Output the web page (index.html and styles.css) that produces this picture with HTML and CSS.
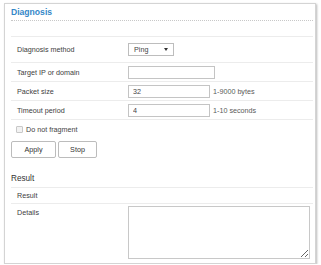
FILE: index.html
```html
<!DOCTYPE html>
<html>
<head>
<meta charset="utf-8">
<link rel="stylesheet" href="styles.css">
</head>
<body>
<div class="panel">
  <div class="title">Diagnosis</div>
  <div class="form">
    <div class="row row-first">
      <div class="label">Diagnosis method</div>
      <div class="field">
        <span class="select-wrap"><select class="select"><option>Ping</option><option>Traceroute</option></select></span>
      </div>
    </div>
    <div class="row">
      <div class="label">Target IP or domain</div>
      <div class="field"><input class="input input-wide" type="text" value=""></div>
    </div>
    <div class="row">
      <div class="label">Packet size</div>
      <div class="field"><input class="input" type="text" value="32"><span class="hint">1-9000 bytes</span></div>
    </div>
    <div class="row row-last">
      <div class="label">Timeout period</div>
      <div class="field"><input class="input" type="text" value="4"><span class="hint">1-10 seconds</span></div>
    </div>
  </div>
  <label class="check-row"><input class="check" type="checkbox"><span>Do not fragment</span></label>
  <div class="buttons">
    <button class="btn btn-apply">Apply</button>
    <button class="btn btn-stop">Stop</button>
  </div>
  <div class="section">Result</div>
  <div class="form">
    <div class="row row-result">
      <div class="label">Result</div>
      <div class="field"></div>
    </div>
    <div class="row row-details">
      <div class="label label-top">Details</div>
      <div class="field field-top"><textarea class="textarea"></textarea></div>
    </div>
  </div>
</div>
</body>
</html>
```
FILE: styles.css
```css
html, body {
  margin: 0;
  padding: 0;
  background: #ffffff;
}
body {
  font-family: "Liberation Sans", Arial, sans-serif;
  font-size: 7.2px;
  color: #444444;
}
.panel {
  box-sizing: border-box;
  margin: 3px 0 0 4px;
  width: 312px;
  height: 261px;
  border: 1px solid #d4d4d4;
  box-shadow: 1px 1px 2px rgba(0, 0, 0, 0.28);
  padding: 0 2px 0 6px;
  background: #ffffff;
}
.title {
  padding: 2px 0 2px 0;
  line-height: 12px;
  font-size: 8.6px;
  font-weight: bold;
  color: #3387c8;
  border-bottom: 1px dotted #c8c8c8;
}
.form {
  display: flex;
  flex-direction: column;
}
.title + .form {
  margin-top: 15px;
}
.row {
  display: flex;
  align-items: center;
  height: 18px;
  border-top: 1px solid #ececec;
}
.row-first {
  height: 25px;
}
.row-last {
  border-bottom: 1px solid #ececec;
}
.label {
  width: 111px;
  padding-left: 6px;
  flex: none;
  color: #404040;
}
.field {
  display: flex;
  align-items: center;
  gap: 3px;
}
.select-wrap {
  position: relative;
  display: inline-block;
}
.select {
  appearance: none;
  -webkit-appearance: none;
  box-sizing: border-box;
  width: 46px;
  height: 13px;
  border: 1px solid #bdbdbd;
  border-radius: 0;
  background: #ffffff;
  font-family: inherit;
  font-size: 7.2px;
  color: #444;
  padding: 0 0 0 5px;
  margin: 0;
  display: block;
}
.select-wrap::after {
  content: "";
  position: absolute;
  right: 6px;
  top: 5px;
  border-left: 2px solid transparent;
  border-right: 2px solid transparent;
  border-top: 3px solid #333;
}
.input {
  box-sizing: border-box;
  width: 82px;
  height: 13px;
  border: 1px solid #c4c4c4;
  border-radius: 0;
  padding: 0 0 0 4px;
  margin: 0;
  font-family: inherit;
  font-size: 7.2px;
  color: #444;
  background: #fff;
  outline: none;
}
.input-wide {
  width: 87px;
}
.hint {
  color: #5a5a5a;
}
.check-row {
  display: flex;
  align-items: center;
  gap: 3px;
  height: 18px;
  padding-left: 5px;
  color: #444;
}
.check {
  appearance: none;
  -webkit-appearance: none;
  box-sizing: border-box;
  width: 7px;
  height: 7px;
  margin: 0;
  border: 1px solid #c8c8c8;
  border-radius: 1px;
  background: #f2f2f2;
}
.buttons {
  display: flex;
  gap: 2px;
  margin-top: 3px;
}
.btn {
  box-sizing: border-box;
  height: 17px;
  border: 1px solid #bcbcbc;
  border-radius: 2px;
  background: #ffffff;
  font-family: inherit;
  font-size: 7.2px;
  color: #333;
  padding: 0;
  margin: 0;
}
.btn-apply {
  width: 45px;
}
.btn-stop {
  width: 39px;
}
.section {
  margin-top: 15px;
  line-height: 12px;
  padding-bottom: 2px;
  font-size: 8.2px;
  color: #333;
}
.row-result {
  height: 15px;
}
.row-details {
  height: auto;
  align-items: flex-start;
}
.label-top {
  padding-top: 4px;
  line-height: 9px;
}
.field-top {
  padding-top: 2px;
}
.textarea {
  box-sizing: border-box;
  width: 182px;
  height: 53px;
  border: 1px solid #c8c8c8;
  margin: 0;
  padding: 0;
  display: block;
  font-family: inherit;
  font-size: 7.2px;
  resize: both;
}
```
